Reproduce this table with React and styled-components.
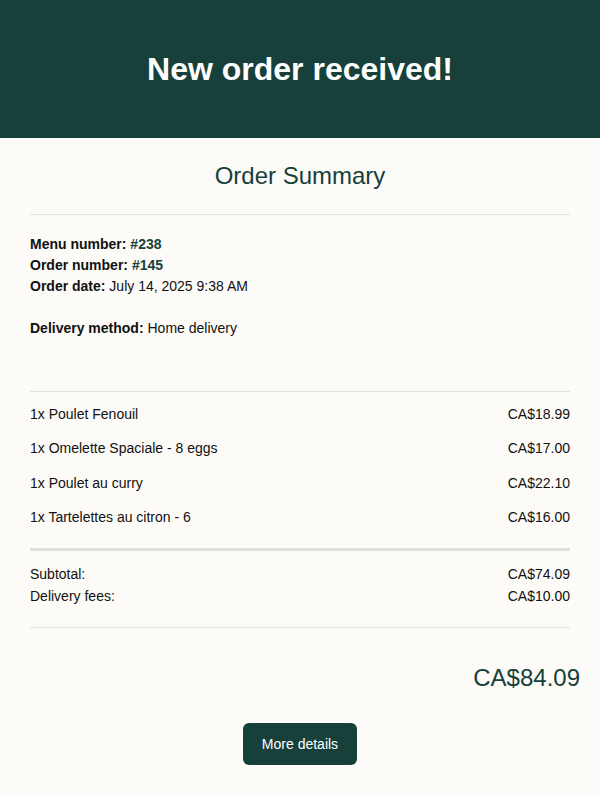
import React from 'react'
import styled, { createGlobalStyle } from 'styled-components'

const GlobalStyle = createGlobalStyle`
    html, body {
        margin: 0;
        padding: 0;
        background: #ffffff;
    }
    body {
        font-family: "Liberation Sans", Arial, Helvetica, sans-serif;
        color: #111111;
    }
`

const green = '#17403a'

const Mail = styled.div`
    width: 600px;
    background: #fcfbf7;
    padding-bottom: 30px;
`
const Header = styled.div`
    height: 138px;
    background: ${green};
    display: flex;
    align-items: center;
    justify-content: center;
`
const Title = styled.h1`
    margin: 0;
    color: #ffffff;
    font-size: 32px;
    font-weight: bold;
`
const Body = styled.div`
    padding: 0 30px;
`
const Subtitle = styled.h2`
    margin: 0;
    padding: 24px 0;
    text-align: center;
    font-size: 24px;
    line-height: 28px;
    font-weight: normal;
    color: ${green};
`
const Rule = styled.div`
    height: ${props => props.thick ? '3px' : '1px'};
    background: ${props => props.thick ? '#e0dfdb' : '#e3e2de'};
`
const Info = styled.div`
    padding: 19px 0 52px;
    font-size: 14px;
    line-height: 21px;
`
const Line = styled.div`
    margin-top: ${props => props.gap ? '21px' : '0'};
`
const Label = styled.b``
const Ref = styled.b`
    color: ${green};
`
const Items = styled.div`
    padding: 5px 0 14px;
`
const Row = styled.div`
    display: flex;
    justify-content: space-between;
    font-size: 14px;
    line-height: ${props => props.tight ? '22px' : '18px'};
    padding: ${props => props.tight ? '0' : '8.17px 0'};
`
const Totals = styled.div`
    padding: 12px 0 20px;
`
const Total = styled.div`
    text-align: right;
    margin-right: -10px;
    padding: 36px 0 31px;
    font-size: 24px;
    line-height: 28px;
    color: ${green};
`
const Actions = styled.div`
    display: flex;
    justify-content: center;
`
const Button = styled.a`
    display: inline-block;
    background: ${green};
    color: #ffffff;
    font-size: 14px;
    line-height: 18px;
    padding: 12px 19px;
    border-radius: 6px;
    text-decoration: none;
`

const items = [
    { name: '1x Poulet Fenouil', price: 'CA$18.99' },
    { name: '1x Omelette Spaciale - 8 eggs', price: 'CA$17.00' },
    { name: '1x Poulet au curry', price: 'CA$22.10' },
    { name: '1x Tartelettes au citron - 6', price: 'CA$16.00' },
]

export default function App() {
    return (
        <Mail>
            <GlobalStyle />
            <Header>
                <Title>New order received!</Title>
            </Header>
            <Body>
                <Subtitle>Order Summary</Subtitle>
                <Rule />
                <Info>
                    <Line><Label>Menu number:</Label> <Ref>#238</Ref></Line>
                    <Line><Label>Order number:</Label> <Ref>#145</Ref></Line>
                    <Line><Label>Order date:</Label> July 14, 2025 9:38 AM</Line>
                    <Line gap><Label>Delivery method:</Label> Home delivery</Line>
                </Info>
                <Rule />
                <Items>
                    {items.map(item => (
                        <Row key={item.name}>
                            <span>{item.name}</span>
                            <span>{item.price}</span>
                        </Row>
                    ))}
                </Items>
                <Rule thick />
                <Totals>
                    <Row tight><span>Subtotal:</span><span>CA$74.09</span></Row>
                    <Row tight><span>Delivery fees:</span><span>CA$10.00</span></Row>
                </Totals>
                <Rule />
                <Total>CA$84.09</Total>
                <Actions>
                    <Button href="#">More details</Button>
                </Actions>
            </Body>
        </Mail>
    )
}
